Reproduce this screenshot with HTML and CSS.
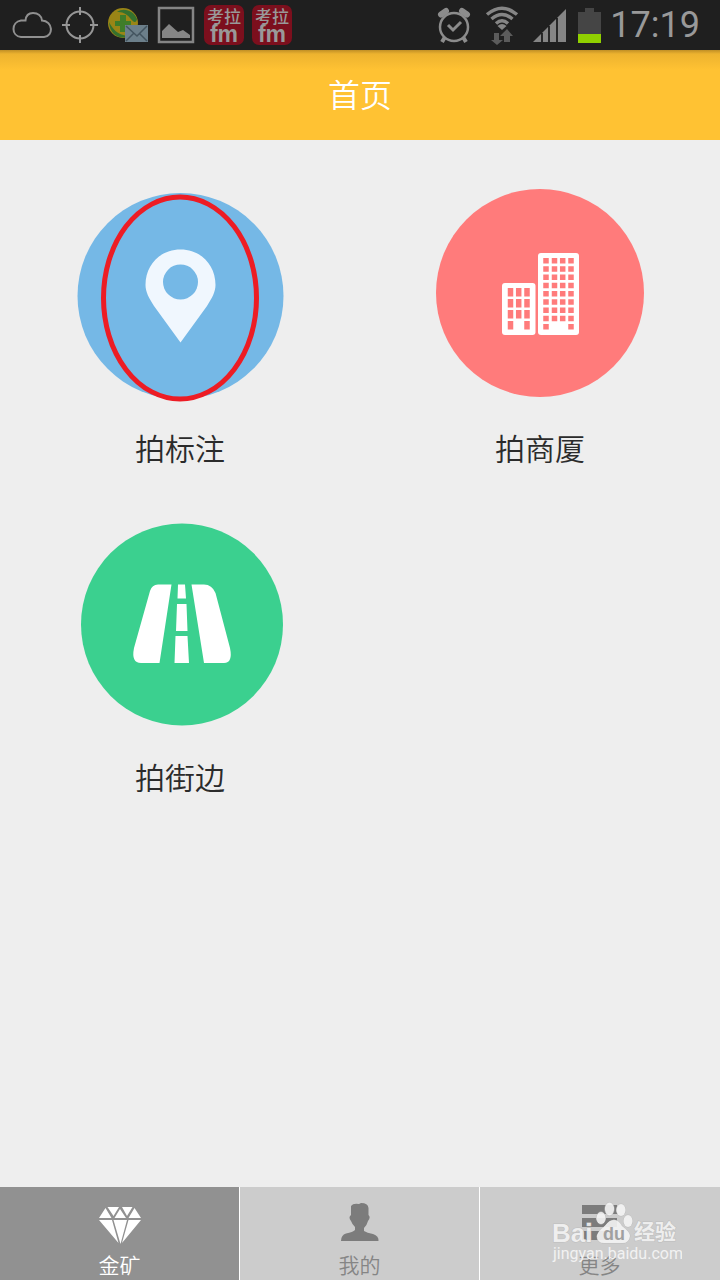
FILE: index.html
```html
<!DOCTYPE html>
<html lang="zh-CN">
<head>
<meta charset="utf-8">
<meta name="viewport" content="width=device-width, initial-scale=1">
<title>首页</title>
<link rel="stylesheet" href="styles.css">
</head>
<body>
<div class="screen">
  <div class="status">
    <div class="status-group">
      <svg class="status-icon" viewBox="0 0 40 40" fill="none" stroke="#909090" stroke-width="2"><path d="M9 32C-1 31-1 17 9 15.500L13.500 15.500C14 10 17 8 21 8C26 8 29.500 11 30 15.500C41 16 42 31 32 32Z"/></svg>
      <svg class="status-icon" viewBox="0 0 40 40" fill="none" stroke="#969696" stroke-width="2"><circle cx="20" cy="20" r="13.500"/><path d="M20 2v8M20 30v8M2 20h8M30 20h8"/></svg>
      <svg class="status-icon" viewBox="0 0 40 40">
        <circle cx="15" cy="18" r="15" fill="#9a8516"/>
        <path d="M9 7C16 2 26 6 29 14C28 19 25 17 22 13C18 8 14 7 9 7ZM1 17C4 23 9 30 20 31C13 35 2 31 1 17Z" fill="#35712e"/>
        <path d="M12 10h6v6h5v5h-5v6h-6v-6H7v-5h5Z" fill="#3f7d29"/>
        <path d="M17 20h23v17H17Z" fill="#6c7f8a"/>
        <path d="M18 21l11 10 10-10M18 36l8-8M39 36l-8-8" fill="none" stroke="#43545f" stroke-width="1.500"/>
      </svg>
      <svg class="status-icon" viewBox="0 0 40 40"><path d="M3 3h34v34H3Z" fill="none" stroke="#858585" stroke-width="2.500"/><path d="M6 33V26l7-7 9 8 5-2 7 5v3Z" fill="#858585"/></svg>
      <svg class="status-icon fm" viewBox="0 0 40 40"><rect width="40" height="40" rx="7" fill="#7c0f1d"/><text x="20" y="18" class="fm-name">考拉</text><text x="20" y="37" class="fm-tag">fm</text></svg>
      <svg class="status-icon fm" viewBox="0 0 40 40"><rect width="40" height="40" rx="7" fill="#7c0f1d"/><text x="20" y="18" class="fm-name">考拉</text><text x="20" y="37" class="fm-tag">fm</text></svg>
    </div>
    <div class="status-group">
      <svg class="status-icon" viewBox="0 0 40 40" fill="none" stroke="#8c8c8c"><circle cx="20" cy="22" r="14" stroke-width="2.500"/><path d="M14 20l5 5 8-8" stroke-width="3"/><path d="M7 9.500l5-3.500M33 9.500l-5-3.500" stroke-width="6" stroke-linecap="round"/><path d="M11 32l-3 5M29 32l3 5" stroke-width="4"/></svg>
      <svg class="status-icon" viewBox="0 0 40 40"><g fill="none" stroke="#858585" stroke-width="3.500"><path d="M5 9.500Q20-3 35 9.500M9.500 14Q20 5 30.500 14M14 18.500Q20 13 26 18.500"/></g><path d="M15.500 21Q20 17 24.500 21L20 25Z" fill="#858585"/><path d="M12 28h5v7h4l-6 5-6-5h3ZM22 37v-6h-4l7-7 6 7h-3v6Z" fill="#5b5b5b"/></svg>
      <svg class="status-icon" viewBox="0 0 40 40"><path d="M3 37L36 4V37Z" fill="#858585"/><path d="M12 28v9M19 21v16M27 13v24" stroke="#111" stroke-width="1.600"/></svg>
      <svg class="battery" viewBox="0 0 24 36"><path d="M0 5h7V1h9v4h7v22H0Z" fill="#454545"/><path d="M0 27h23v9H0Z" fill="#90d000"/></svg>
      <span class="clock">17:19</span>
    </div>
  </div>

  <header class="header"><h1 class="title">首页</h1></header>

  <main class="grid">
    <button class="card" type="button">
      <svg class="card-icon" viewBox="0 0 216 216">
        <circle cx="108.500" cy="108" r="103" fill="#75b8e6"/>
        <path fill-rule="evenodd" fill="#f0f7fe" d="M108.500 154.500L82 118C77 110 73.500 104 73.500 97C73.500 77 88 61.500 108.500 61.500C129 61.500 143.500 77 143.500 97C143.500 104 140 110 135 118ZM108.500 76.500a17.500 17.500 0 1 0 0 35a17.500 17.500 0 1 0 0-35Z"/>
        <ellipse cx="108" cy="110" rx="76.500" ry="101" fill="none" stroke="#ed1c24" stroke-width="5"/>
      </svg>
      <span class="label">拍标注</span>
    </button>
    <button class="card" type="button">
      <svg class="card-icon" viewBox="0 0 216 216">
        <circle cx="108" cy="105" r="104" fill="#ff7b7b"/>
        <rect x="70" y="95" width="33.500" height="52" rx="3" fill="#fff"/>
        <rect x="106" y="65" width="41" height="82" rx="3" fill="#fff"/>
        <g fill="none" stroke="#ff7b7b" stroke-width="5.500">
          <path stroke-dasharray="8.500 2.500" d="M78.500 100v42M95 100v42"/>
          <path stroke-dasharray="8.500 2.500" d="M86.700 100v31"/>
          <path stroke-dasharray="5.500 2.750" d="M114 70v72M139 70v72"/>
          <path stroke-dasharray="5.500 2.750" d="M122.500 70v64M130.700 70v64"/>
        </g>
      </svg>
      <span class="label">拍商厦</span>
    </button>
    <button class="card" type="button">
      <svg class="card-icon" viewBox="0 0 216 216">
        <circle cx="110" cy="107.500" r="101" fill="#3bd08f"/>
        <path fill="#fff" d="M99.500 67.500H86Q80 67.500 78 74L62 131Q59 146 69 146H87.500ZM119.500 67.500H132Q140 67.500 143.500 76L158 131Q161 146 152 146H132ZM106 67.500h7l1 14h-8.500ZM105 87h9.500l1 27H104ZM103.500 119h12l1.500 27h-14.500Z"/>
      </svg>
      <span class="label">拍街边</span>
    </button>
  </main>

  <nav class="tabs">
    <a class="tab active" href="#mine">
      <svg class="tab-icon" viewBox="0 0 44 44"><path fill="#fff" d="M7.500 7L13.500 17H1ZM9.500 6H21L15.500 15ZM22 8L28 17H16.500ZM24 6H34.500L29 15ZM36.500 7L43 17H30.500ZM1 19H14L20.500 42ZM15.500 19H29L22.500 43ZM30.500 19H43L24 42Z"/></svg>
      <span class="tab-label">金矿</span>
    </a>
    <a class="tab" href="#me">
      <svg class="tab-icon" viewBox="0 0 44 44"><path fill="#7c7c7c" d="M13 5Q15 2 21 3L23 2Q30 2 30.500 7V14Q33 16 30 20Q29 24 26 27V30Q29 32 35 33Q41 35 40.500 40H3Q3 34 8 32.500Q15 31 17 29V26Q14 23 13 20Q10 16 13 14Z"/></svg>
      <span class="tab-label">我的</span>
    </a>
    <a class="tab" href="#more">
      <svg class="tab-icon" viewBox="0 0 44 44"><path fill="#7c7c7c" d="M4 4h35v9H4ZM4 17h35v9H4ZM4 30h35v9H4Z"/></svg>
      <span class="tab-label">更多</span>
    </a>
    <svg class="watermark" viewBox="0 0 132 66">
      <g fill="#f4f4f4" fill-opacity=".9" stroke="#bdbdbd" stroke-width="1" paint-order="stroke">
        <text x="2" y="40" class="brand">Bai</text>
        <ellipse cx="51" cy="16" rx="4.500" ry="6"/><ellipse cx="59.500" cy="7" rx="4.500" ry="6.500"/><ellipse cx="71" cy="8" rx="4.500" ry="6"/><ellipse cx="78" cy="19" rx="4.500" ry="6"/>
        <path d="M64 18Q69 18 72 24Q80 30 80 34Q79 42 71 41H56Q47 42 47 34Q48 29 55 24Q59 18 64 18Z"/>
        <text x="84" y="37" class="sub">经验</text>
      </g>
      <text x="53" y="38" class="du">du</text>
      <text x="3" y="57" class="url">jingyan.baidu.com</text>
    </svg>
  </nav>
</div>
</body>
</html>
```
FILE: styles.css
```css
* { box-sizing: border-box; }

body {
  margin: 0;
  background: #eee;
  font-family: Roboto, "Noto Sans CJK SC", sans-serif;
  font-weight: 350;
}

.screen {
  display: flex;
  flex-direction: column;
  min-height: 100vh;
}

.status {
  display: flex;
  align-items: center;
  justify-content: space-between;
  height: 50px;
  padding: 0 20px 0 12px;
  background: #1f1f1f;
}

.status-group {
  display: flex;
  align-items: center;
  gap: 8px;
}

.status-icon { width: 40px; height: 40px; }
.battery { width: 24px; height: 36px; }

.fm text {
  fill: #999;
  text-anchor: middle;
}
.fm-name { font: 500 17px "Noto Sans CJK SC", sans-serif; }
.fm-tag { font: 700 23px "Liberation Sans", sans-serif; }

.clock {
  color: #999;
  font-size: 36px;
  font-weight: 400;
  line-height: 40px;
}

.header {
  display: flex;
  align-items: center;
  justify-content: center;
  height: 90px;
  padding-top: 2px;
  background: linear-gradient(#c08f25, #edb32f 4px, #ffc233 20px);
}

.title {
  margin: 0;
  color: #fff;
  font-size: 32px;
  font-weight: 350;
  line-height: 40px;
}

.grid {
  flex: 1;
  display: grid;
  grid-template-columns: 1fr 1fr;
  align-content: start;
  row-gap: 49px;
  padding: 48px 0;
}

.card {
  display: flex;
  flex-direction: column;
  align-items: center;
  gap: 28px;
  padding: 0;
  border: 0;
  background: none;
  color: #2b2b2b;
  font: inherit;
}

.card-icon { width: 216px; height: 216px; }
.label { font-size: 30px; line-height: 36px; }

.tabs {
  position: relative;
  display: grid;
  grid-template-columns: repeat(3, 1fr);
}

.tab {
  display: flex;
  flex-direction: column;
  align-items: center;
  gap: 9px;
  height: 93px;
  padding-top: 14px;
  border-right: 1px solid #fff;
  background: #ccc;
  color: #858585;
  text-decoration: none;
}

.tab:last-of-type { border-right-color: #ccc; }
.tab.active { background: #919191; color: #fff; }
.tab-icon { flex: none; width: 44px; height: 44px; }
.tab-label { font-size: 21px; line-height: 24px; }

.watermark {
  position: absolute;
  right: 38px;
  bottom: 12px;
  width: 132px;
  height: 66px;
}

.brand { font: 700 26px "Liberation Sans", sans-serif; }
.sub { font: 700 21px "Noto Sans CJK SC", sans-serif; }
.du { fill: #a0a0a0; font: 700 18px "Liberation Sans", sans-serif; }
.url { fill: #f2f2f2; font: 400 16px Roboto, sans-serif; }
```
